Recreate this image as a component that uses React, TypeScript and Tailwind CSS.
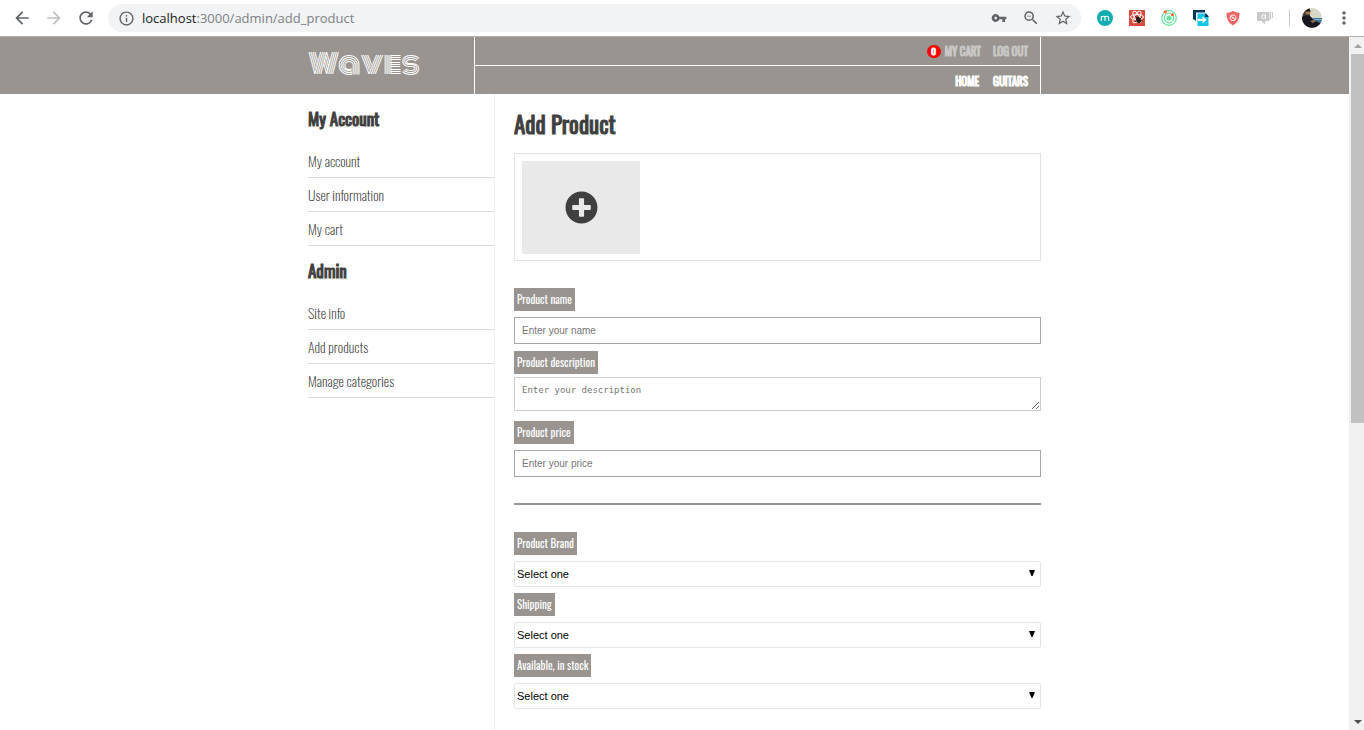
import type { ReactNode } from "react";
import { FaPlusCircle } from "react-icons/fa";
import {
  MdArrowBack,
  MdArrowForward,
  MdInfoOutline,
  MdMoreVert,
  MdOutlineZoomOut,
  MdRefresh,
  MdStarBorder,
  MdVpnKey,
} from "react-icons/md";

const CONDENSED =
  "font-['Oswald','Liberation_Sans_Narrow','Roboto_Condensed','Open_Sans_Condensed','DejaVu_Sans_Condensed',sans-serif]";

function ToolButton({ label, children }: { label: string; children: ReactNode }) {
  return (
    <button type="button" aria-label={label} className="flex size-5 items-center justify-center">
      {children}
    </button>
  );
}

function Toolbar() {
  return (
    <div className="flex h-[37px] shrink-0 items-center border-b border-[#b1afad] bg-white pr-2.5 pl-3 text-[#5f6368]">
      <div className="flex items-center gap-3">
        <ToolButton label="Back">
          <MdArrowBack size={20} />
        </ToolButton>
        <ToolButton label="Forward">
          <MdArrowForward size={20} className="text-[#bcbec0]" />
        </ToolButton>
        <ToolButton label="Reload">
          <MdRefresh size={20} />
        </ToolButton>
      </div>
      <div className="ml-3 flex h-7 flex-1 items-center rounded-full bg-[#f1f3f4] pr-2 pl-2">
        <ToolButton label="Site information">
          <MdInfoOutline size={17} />
        </ToolButton>
        <div
          role="textbox"
          aria-label="Address"
          className="ml-1.5 flex-1 font-['Open_Sans',sans-serif] text-[13px] leading-5 text-[#7c8084]"
        >
          <span className="text-[#202124]">localhost</span>:3000/admin/add_product
        </div>
        <div className="flex items-center gap-3">
          <ToolButton label="Saved passwords">
            <MdVpnKey size={16} />
          </ToolButton>
          <ToolButton label="Zoom">
            <MdOutlineZoomOut size={18} />
          </ToolButton>
          <ToolButton label="Bookmark this page">
            <MdStarBorder size={18} />
          </ToolButton>
        </div>
      </div>
      <div className="ml-3.5 flex items-center gap-3">
        <ToolButton label="Extension M">
          <svg viewBox="0 0 16 16" className="size-4">
            <circle cx="8" cy="8" r="8" fill="#12adb0" />
            <path d="M4.3 11V6.2M4.3 8c0-2.3 3.7-2.3 3.7 0v3M8 8c0-2.3 3.7-2.3 3.7 0v3" fill="none" stroke="#fff" strokeWidth="1.1" />
          </svg>
        </ToolButton>
        <ToolButton label="React extension">
          <svg viewBox="0 0 16 16" className="size-4">
            <rect width="16" height="16" fill="#d94a3c" />
            <g fill="none" stroke="#fff" strokeWidth="1">
              <ellipse cx="8" cy="7" rx="6.5" ry="2.5" />
              <ellipse cx="8" cy="7" rx="6.5" ry="2.5" transform="rotate(60 8 7)" />
              <ellipse cx="8" cy="7" rx="6.5" ry="2.5" transform="rotate(120 8 7)" />
            </g>
            <ellipse cx="9.5" cy="10" rx="2.2" ry="3.2" fill="#231815" transform="rotate(-25 9.5 10)" />
            <path d="M6.5 6.5l3 2M12.5 7.5l-2 2M6 11.5l3-1M13.5 11l-3-1" stroke="#231815" strokeWidth="1" />
          </svg>
        </ToolButton>
        <ToolButton label="Orbit extension">
          <svg viewBox="0 0 16 16" className="size-4">
            <g fill="none" stroke="#68e2a0" strokeWidth="1.2">
              <circle cx="8" cy="8" r="7.3" />
              <circle cx="8" cy="8" r="4.8" />
            </g>
            <circle cx="8" cy="8" r="2.6" fill="#68e2a0" />
            <circle cx="4.3" cy="1.8" r="1.6" fill="#ff6327" />
            <circle cx="11.5" cy="4.8" r="1.5" fill="#ff6327" />
          </svg>
        </ToolButton>
        <ToolButton label="Tab extension">
          <svg viewBox="0 0 16 16" className="size-4">
            <path d="M0 0h12v2.5H3v8.5L0 9z" fill="#06345c" />
            <path d="M4.5 3.5h8l3 3V16h-11z" fill="#10c4e8" />
            <path d="M12 3.5h1l2.5 2.5v1H12z" fill="#06345c" />
            <path d="M5 8.7h4.5V6.2l4 3.6-4 3.6v-2.5H5z" fill="#fff" />
          </svg>
        </ToolButton>
        <ToolButton label="Ad blocker">
          <svg viewBox="0 0 16 16" className="size-4">
            <path d="M8 .8c2 1.5 4 2 6.5 2C14.5 8.5 13 12.8 8 15.2 3 12.8 1.5 8.5 1.5 2.8 4 2.8 6 2.3 8 .8z" fill="#ef6565" />
            <circle cx="8" cy="7.8" r="2.9" fill="none" stroke="#fff" strokeWidth=".9" />
            <path d="M6 5.8l4 4M6.7 7.8h2.6" stroke="#fff" strokeWidth=".9" />
          </svg>
        </ToolButton>
        <ToolButton label="Chat extension">
          <svg viewBox="0 0 16 16" className="size-4">
            <path d="M0 2h12.5v9H8v3.5L4.500 11H0z" fill="#cacaca" />
            <path d="M13 2h1.2v7.5H13zM15 2h1v6h-1z" fill="#cacaca" />
            <circle cx="6.5" cy="6.5" r="1.8" fill="none" stroke="#fff" />
            <path d="M8.5 4.5V8.5" stroke="#fff" />
          </svg>
        </ToolButton>
      </div>
      <span className="ml-3.5 h-4 w-px bg-[#c8cacc]" />
      <button type="button" aria-label="Profile" className="ml-3 flex size-5 items-center justify-center">
        <svg viewBox="0 0 20 20" className="size-5">
          <clipPath id="avatar">
            <circle cx="10" cy="10" r="10" />
          </clipPath>
          <g clipPath="url(#avatar)">
            <rect width="20" height="20" fill="#d8d8c8" />
            <path d="M0 0h8v12H0z" fill="#45413c" />
            <path d="M11 10h9v5h-9z" fill="#3f7398" />
            <path d="M11 11h9v1h-9z" fill="#84adc8" />
            <path d="M0 9l4-2 4 1 4 4 8 4v4H0z" fill="#171820" />
            <circle cx="6" cy="4" r="2.5" fill="#a87759" />
            <path d="M3.5 3.5c0-3 5-3 5 0z" fill="#17130f" />
            <path d="M8 13l4-1 2 1-3 2z" fill="#9b705a" />
          </g>
        </svg>
      </button>
      <button type="button" aria-label="Menu" className="ml-3 flex size-5 items-center justify-center">
        <MdMoreVert size={20} />
      </button>
    </div>
  );
}

function SiteHeader() {
  return (
    <header className="bg-[#99948f]">
      <div className="mx-auto flex h-[57px] w-full max-w-[733px]">
        <div className="flex flex-1 items-center pb-1">
          <a href="#home" className="font-['Monoton','Lato',sans-serif] text-[27px] leading-9 text-white">
            Waves
          </a>
        </div>
        <div
          className={`flex w-[567px] flex-col border-x border-white text-[11px] font-normal uppercase [-webkit-text-stroke:1px] ${CONDENSED}`}
        >
          <nav aria-label="User" className="flex h-[29px] items-center justify-end border-b border-white pr-3 text-[#c9c8c6]">
            <a href="#cart" className="flex items-center">
              <span className="mr-1 flex h-[13px] w-[14px] items-center justify-center rounded-full bg-[#ff0000] text-[9px] leading-3 text-white">
                0
              </span>
              My cart
            </a>
            <a href="#logout" className="ml-3">
              Log out
            </a>
          </nav>
          <nav aria-label="Site" className="flex h-7 items-center justify-end pt-0.5 pr-3 text-white">
            <a href="#home">Home</a>
            <a href="#guitars" className="ml-3.5">
              Guitars
            </a>
          </nav>
        </div>
      </div>
    </header>
  );
}

function MenuSection({ title, links }: { title: string; links: string[] }) {
  return (
    <section>
      <h2 className="flex h-[50px] items-center text-[17px] leading-5 font-normal text-[#3f3f3f] [-webkit-text-stroke:1px]">
        {title}
      </h2>
      <ul>
        {links.map((link) => (
          <li key={link} className="flex h-[34px] items-center border-b border-[#dadada]">
            <a
              href={`#${link.toLowerCase().replace(/ /g, "-")}`}
              className="text-[14px] leading-5 font-extralight text-[#2b2b2b]"
            >
              {link}
            </a>
          </li>
        ))}
      </ul>
    </section>
  );
}

function FieldLabel({ id, children }: { id: string; children: ReactNode }) {
  return (
    <label htmlFor={id} className="block h-[23px] w-fit bg-[#99948f] px-[3px] text-[11px] leading-[23px] text-white">
      {children}
    </label>
  );
}

function TextField({ id, label, placeholder }: { id: string; label: string; placeholder: string }) {
  return (
    <div>
      <FieldLabel id={id}>{label}</FieldLabel>
      <input
        id={id}
        type="text"
        placeholder={placeholder}
        className="mt-1.5 block h-[27px] w-full border border-[#a6a6a6] bg-white px-[7px] font-['Liberation_Sans',Arial,sans-serif] text-[10px] placeholder:text-[#757575]"
      />
    </div>
  );
}

function SelectField({ id, label }: { id: string; label: string }) {
  return (
    <div>
      <FieldLabel id={id}>{label}</FieldLabel>
      <div className="relative mt-1.5">
        <select
          id={id}
          className="block h-[26px] w-full appearance-none rounded-xs border border-[#e5e5e5] bg-white px-0.5 font-['Liberation_Sans',Arial,sans-serif] text-[11px] text-black"
        >
          <option>Select one</option>
        </select>
        <svg viewBox="0 0 6 6" aria-hidden="true" className="pointer-events-none absolute top-[9px] right-1.5 size-1.5">
          <path d="M0 0h6L3.5 6h-1z" />
        </svg>
      </div>
    </div>
  );
}

function ProductForm() {
  return (
    <form className="flex-1 pl-[19px]">
      <h1 className="flex h-[59px] items-center text-[23px] leading-8 font-normal text-[#3f3f3f] [-webkit-text-stroke:1px]">
        Add Product
      </h1>
      <div className="h-[108px] border border-[#e3e3e3] p-[7px]">
        <button
          type="button"
          aria-label="Upload picture"
          className="flex h-[93px] w-[118px] items-center justify-center bg-[#e9e9e9]"
        >
          <FaPlusCircle size={33} className="text-[#3f3f3f]" />
        </button>
      </div>
      <div className="mt-[27px]">
        <TextField id="name" label="Product name" placeholder="Enter your name" />
      </div>
      <div className="mt-[7px]">
        <FieldLabel id="description">Product description</FieldLabel>
        <textarea
          id="description"
          placeholder="Enter your description"
          className="mt-[3px] block h-[34px] w-full resize border border-[#cecece] bg-white px-[7px] py-1.5 font-['DejaVu_Sans_Mono','Liberation_Mono',monospace] text-[9px] leading-3 placeholder:text-[#757575]"
        />
      </div>
      <div className="mt-2.5">
        <TextField id="price" label="Product price" placeholder="Enter your price" />
      </div>
      <hr className="mt-[26px] mb-[27px] border-t-2 border-[#99948f]" />
      <div className="flex flex-col gap-1.5">
        <SelectField id="brand" label="Product Brand" />
        <SelectField id="shipping" label="Shipping" />
        <SelectField id="available" label="Available, in stock" />
      </div>
    </form>
  );
}

function PageScrollbar() {
  return (
    <div aria-hidden="true" className="flex w-[15px] shrink-0 flex-col items-center bg-[#f1f1f1] pl-0.5">
      <div className="flex h-[17px] items-center">
        <svg viewBox="0 0 8 4" className="h-1 w-2 fill-[#a3a3a3]">
          <path d="M0 4L4 0l4 4z" />
        </svg>
      </div>
      <div className="h-[369px] w-full bg-[#c1c1c1]" />
      <div className="mt-auto flex h-[17px] items-center">
        <svg viewBox="0 0 8 4" className="h-1 w-2 fill-[#505050]">
          <path d="M0 0h8L4 4z" />
        </svg>
      </div>
    </div>
  );
}

export default function App() {
  return (
    <div className="flex min-h-screen flex-col bg-white">
      <Toolbar />
      <div className="flex flex-1">
        <div className="flex min-w-0 flex-1 flex-col">
          <SiteHeader />
          <main className={`mx-auto flex w-full max-w-[733px] flex-1 ${CONDENSED}`}>
            <aside className="w-[187px] shrink-0 border-r border-[#f2f2f2]">
              <MenuSection title="My Account" links={["My account", "User information", "My cart"]} />
              <MenuSection title="Admin" links={["Site info", "Add products", "Manage categories"]} />
            </aside>
            <ProductForm />
          </main>
        </div>
        <PageScrollbar />
      </div>
    </div>
  );
}
